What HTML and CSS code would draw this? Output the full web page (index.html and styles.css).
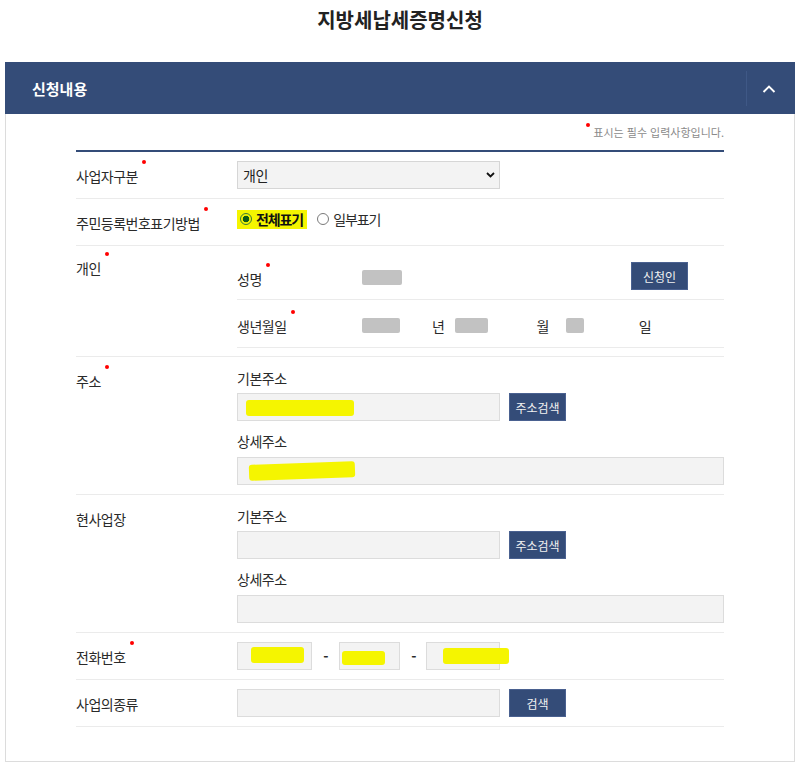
FILE: index.html
```html
<!DOCTYPE html>
<html lang="ko">
<head>
<meta charset="utf-8">
<title>지방세납세증명신청</title>
<link rel="stylesheet" href="styles.css">
</head>
<body>
<h1 class="page-title">지방세납세증명신청</h1>
<section class="panel">
  <div class="panel-head">
    <h2 class="panel-title">신청내용</h2>
    <button class="panel-toggle" type="button" aria-label="접기">
      <svg width="14" height="8" viewBox="0 0 14 8"><polyline points="1.5,7 7,1.5 12.5,7" fill="none" stroke="#fff" stroke-width="1.9"/></svg>
    </button>
  </div>
  <div class="panel-body">
    <p class="notice"><span class="notice-dot"></span>표시는 필수 입력사항입니다.</p>
    <div class="form">
      <div class="row">
        <div class="label"><span class="req">사업자구분</span></div>
        <div class="field">
          <div class="select"><span>개인</span>
            <svg width="9" height="6" viewBox="0 0 9 6"><polyline points="1,1 4.5,4.5 8,1" fill="none" stroke="#111" stroke-width="1.8"/></svg>
          </div>
        </div>
      </div>
      <div class="row">
        <div class="label"><span class="req">주민등록번호표기방법</span></div>
        <div class="field field--radios">
          <label class="radio-opt radio-opt--marked"><input class="radio" type="radio" name="disp" checked><b>전체표기</b></label>
          <label class="radio-opt"><input class="radio" type="radio" name="disp">일부표기</label>
        </div>
      </div>
      <div class="row row--person">
        <div class="label"><span class="req">개인</span></div>
        <div class="field">
          <div class="subrow">
            <div class="sublabel"><span class="req">성명</span></div>
            <div class="subfield">
              <span class="blur blur--name"></span>
              <button class="btn btn--applicant" type="button">신청인</button>
            </div>
          </div>
          <div class="subrow">
            <div class="sublabel"><span class="req">생년월일</span></div>
            <div class="subfield birth">
              <span class="blur blur--year"></span><span class="unit unit--year">년</span>
              <span class="blur blur--month"></span><span class="unit unit--month">월</span>
              <span class="blur blur--day"></span><span class="unit">일</span>
            </div>
          </div>
        </div>
      </div>
      <div class="row">
        <div class="label"><span class="req">주소</span></div>
        <div class="field">
          <div class="addr-label">기본주소</div>
          <div class="input-line">
            <div class="input"><span class="mark mark--addr"></span></div>
            <button class="btn" type="button">주소검색</button>
          </div>
          <div class="addr-label addr-label--detail">상세주소</div>
          <div class="input input--wide"><span class="mark mark--detail"></span></div>
        </div>
      </div>
      <div class="row">
        <div class="label">현사업장</div>
        <div class="field">
          <div class="addr-label">기본주소</div>
          <div class="input-line">
            <div class="input"></div>
            <button class="btn" type="button">주소검색</button>
          </div>
          <div class="addr-label addr-label--detail">상세주소</div>
          <div class="input input--wide"></div>
        </div>
      </div>
      <div class="row">
        <div class="label"><span class="req">전화번호</span></div>
        <div class="field phone">
          <div class="input input--tel1"><span class="mark mark--tel1"></span></div>
          <span class="dash">-</span>
          <div class="input input--tel2"><span class="mark mark--tel2"></span></div>
          <span class="dash">-</span>
          <div class="input input--tel3"><span class="mark mark--tel3"></span></div>
        </div>
      </div>
      <div class="row">
        <div class="label">사업의종류</div>
        <div class="field input-line">
          <div class="input"></div>
          <button class="btn" type="button">검색</button>
        </div>
      </div>
    </div>
  </div>
</section>
</body>
</html>
```
FILE: styles.css
```css
* { box-sizing: border-box; }

body {
  margin: 0;
  background: #fff;
  color: #2a2a2a;
  font-family: "Noto Sans CJK KR", "Noto Sans", sans-serif;
  font-size: 14px;
  letter-spacing: -0.5px;
}

.page-title {
  margin: 0;
  padding-top: 6px;
  height: 34px;
  line-height: 28px;
  text-align: center;
  font-size: 20px;
  font-weight: 700;
  color: #222;
  letter-spacing: 0;
}

.panel {
  margin: 28px 5px 0;
}

.panel-head {
  display: flex;
  align-items: center;
  justify-content: space-between;
  height: 52px;
  padding: 0 5px 0 27px;
  background: #344c78;
}

.panel-title {
  margin: 0;
  color: #fff;
  font-size: 15px;
  font-weight: 700;
  letter-spacing: 0;
}

.panel-toggle {
  display: flex;
  align-items: center;
  justify-content: center;
  width: 44px;
  height: 35px;
  margin-top: 1px;
  padding: 0;
  background: transparent;
  border: 0;
  border-left: 1px solid #3f5886;
}

.panel-body {
  border: 1px solid #dcdcdc;
  border-top: 0;
  padding: 10px 70px 34px;
}

.notice {
  display: flex;
  justify-content: flex-end;
  align-items: flex-start;
  margin: 0;
  line-height: 16px;
  font-size: 11px;
  color: #8a8a8a;
  letter-spacing: 0;
}

.notice-dot {
  width: 4px;
  height: 4px;
  margin: -1px 3px 0 0;
  border-radius: 50%;
  background: #f00;
}

.form {
  margin-top: 10px;
  border-top: 2px solid #344c78;
}

.row {
  display: grid;
  grid-template-columns: 161px 1fr;
  min-height: 47px;
  padding: 9px 0;
  border-bottom: 1px solid #ebebeb;
}

.row--person {
  padding: 7px 0 8px;
}

.label {
  padding-top: 5px;
  line-height: 20px;
}

.req {
  position: relative;
  display: inline-block;
  line-height: 20px;
}

.req::after {
  content: "";
  position: absolute;
  top: -6px;
  right: -8px;
  width: 4px;
  height: 4px;
  border-radius: 50%;
  background: #f00;
}

.field {
  min-width: 0;
}

.select {
  display: flex;
  align-items: center;
  justify-content: space-between;
  width: 263px;
  height: 28px;
  padding: 0 4px 0 5px;
  background: #f3f3f3;
  border: 1px solid #d6d6d6;
  color: #222;
}

.field--radios {
  display: flex;
  align-items: center;
  align-self: start;
  margin-top: 1px;
  height: 20px;
}

.radio-opt {
  display: inline-flex;
  align-items: center;
  gap: 4px;
  height: 19px;
  letter-spacing: -1.1px;
}

.radio-opt b {
  font-weight: 700;
  color: #111;
}

.radio-opt--marked {
  padding: 0 4px 0 3px;
  margin-right: 10px;
  background: #f5f500;
}

.radio {
  appearance: none;
  -webkit-appearance: none;
  width: 12px;
  height: 12px;
  margin: 0;
  border-radius: 50%;
  border: 1px solid #7a7a7a;
  background: #fff;
}

.radio:checked {
  border-color: #3d7b3a;
  background: radial-gradient(circle, #0f5a14 0 3px, #f5f500 3.6px);
}

.subrow {
  display: grid;
  grid-template-columns: 125px 1fr;
  align-items: center;
  min-height: 47px;
  border-bottom: 1px solid #ebebeb;
}

.subrow + .subrow {
  min-height: 48px;
}

.sublabel {
  padding-top: 5px;
  line-height: 20px;
}

.subfield {
  display: flex;
  align-items: center;
}

.blur {
  display: inline-block;
  height: 15px;
  border-radius: 2px;
  background: #c2c2c2;
  filter: blur(0.5px);
}

.blur--name { width: 40px; margin-top: 2px; }
.blur--year { width: 38px; margin-right: 32px; margin-top: 3px; }
.blur--month { width: 33px; margin-right: 48px; margin-top: 3px; }
.blur--day { width: 18px; margin-right: 55px; margin-top: 3px; }

.unit {
  padding-top: 5px;
  line-height: 20px;
}

.unit--year { margin-right: 11px; }
.unit--month { margin-right: 17px; }

.btn {
  width: 57px;
  height: 28px;
  padding: 0;
  background: #344c78;
  border: 1px solid #4a6190;
  color: #f1f1f1;
  font: inherit;
  font-size: 12px;
  letter-spacing: -0.1px;
}

.btn--applicant {
  margin-left: auto;
  margin-right: 36px;
}

.addr-label {
  margin: 2px 0 5px;
  line-height: 20px;
}

.addr-label--detail {
  margin: 10px 0 6px;
}

.input-line {
  display: flex;
  gap: 9px;
}

.input {
  display: flex;
  align-items: center;
  width: 263px;
  height: 28px;
  background: #f3f3f3;
  border: 1px solid #dcdcdc;
}

.input--wide { width: 100%; }
.input--tel1 { width: 75px; }
.input--tel2 { width: 61px; }
.input--tel3 { width: 74px; }

.mark {
  display: inline-block;
  height: 16px;
  border-radius: 3px;
  background: #f5f500;
}

.mark--addr { width: 108px; margin: 2px 0 0 8px; }
.mark--detail { width: 106px; margin: 0 0 0 11px; transform: rotate(-2deg); }
.mark--tel1 { width: 53px; margin: -3px 0 0 13px; }
.mark--tel2 { width: 43px; margin: 3px 0 0 2px; height: 14px; }
.mark--tel3 { width: 66px; margin: 0 0 0 16px; flex-shrink: 0; }

.phone {
  display: flex;
  align-items: center;
}

.dash {
  width: 27px;
  text-align: center;
  font-weight: 700;
}

.phone .dash + .input--tel3 { margin-left: -1px; }
```
